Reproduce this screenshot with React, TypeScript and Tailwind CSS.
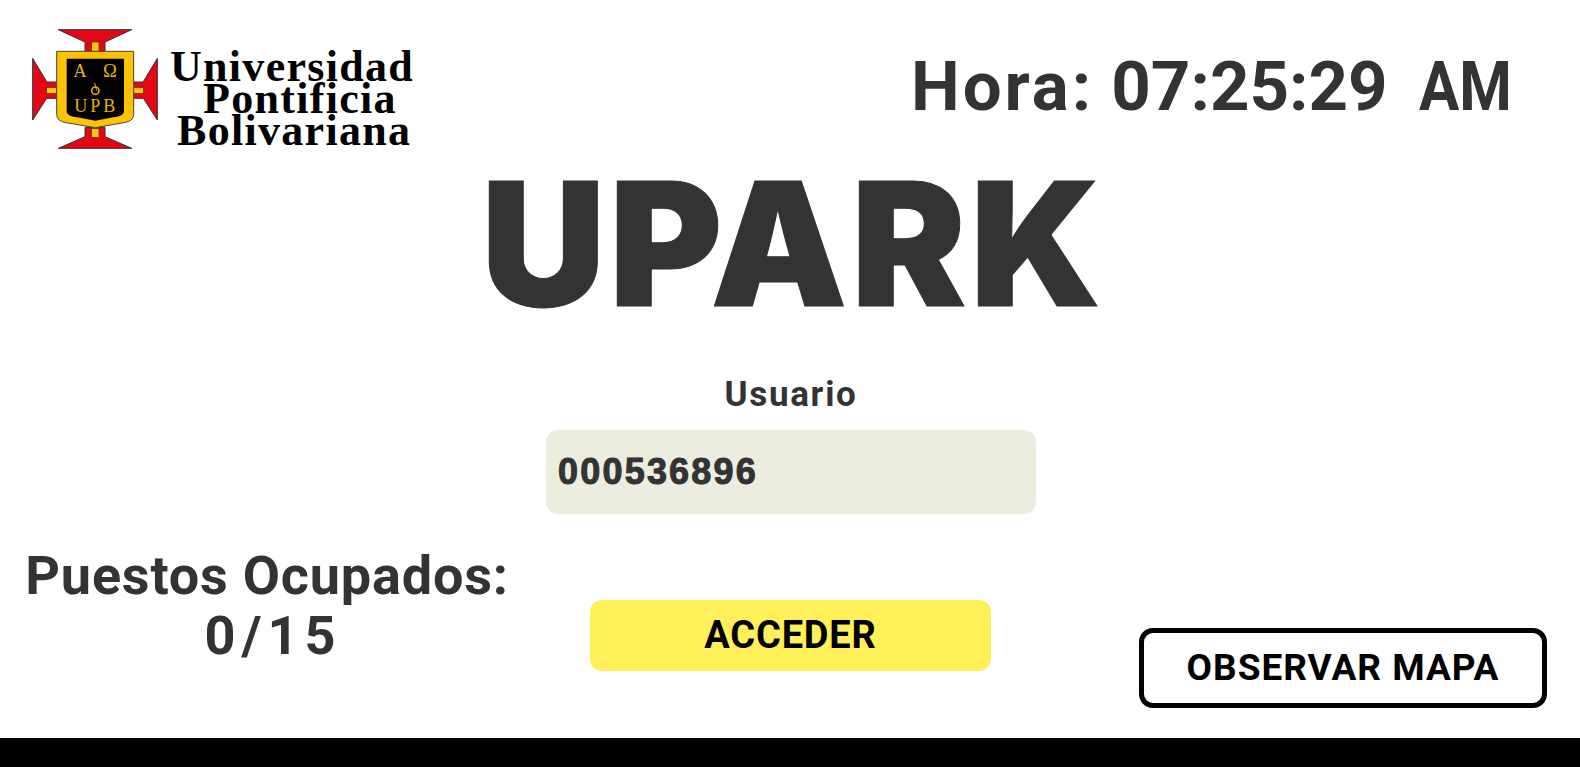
import React from "react";

const sans = "font-['Roboto','Liberation_Sans',sans-serif]";

const Crest: React.FC = () => {
  return (
    <svg viewBox="0 0 450 420" className="w-[150px] h-[140px] shrink-0">
      <g fill="#e30613" stroke="#333" strokeWidth="3">
        <path d="M115 29H335L255 66V96H195V66Z" />
        <path d="M115 385H335L255 350V322H195V350Z" />
        <path d="M38 115L80 185V186H112V235H80L38 300Z" />
        <path d="M412 115L370 185V186H338V235H370L412 300Z" />
      </g>
      <g fill="#fdc300" stroke="#333" strokeWidth="2">
        <rect x="215" y="66" width="22" height="28" />
        <rect x="215" y="326" width="22" height="26" />
        <rect x="80" y="203" width="30" height="17" />
        <rect x="340" y="203" width="30" height="17" />
      </g>
      <path
        d="M110 94H341V280C341 300 330 306 300 310L226 323L150 310C120 306 110 300 110 280Z"
        fill="#fdc300"
        stroke="#444"
        strokeWidth="3"
      />
      <path d="M140 116H312V272C312 285 300 289 280 292L226 302L172 292C152 289 140 285 140 272Z" fill="#000" />
      <g fill="#e8b000" fontFamily="Liberation Serif, serif">
        <text x="180" y="172" fontSize="56" textAnchor="middle">A</text>
        <text x="270" y="172" fontSize="56" textAnchor="middle">Ω</text>
        <text x="229" y="276" fontSize="54" textAnchor="middle" letterSpacing="9">UPB</text>
      </g>
      <circle cx="226" cy="212" r="11" fill="none" stroke="#e8b000" strokeWidth="5" />
      <path d="M224 188L230 212" stroke="#e8b000" strokeWidth="3" />
    </svg>
  );
};

const Logo: React.FC = () => {
  return (
    <div className="flex items-start">
      <Crest />
      <div className="flex flex-col font-['Liberation_Serif',serif] font-bold text-black text-[44px] leading-[32px] pt-[31px] tracking-[1.3px]">
        <span>Universidad</span>
        <span className="ml-[33px]">Pontificia</span>
        <span className="ml-[7px]">Bolivariana</span>
      </div>
    </div>
  );
};

const App: React.FC = () => {
  return (
    <div className={`flex flex-col w-full h-[767px] bg-white overflow-hidden text-[#333] ${sans}`}>
      <header className="flex justify-between items-start pl-[20px] pr-[68px] pt-[20px]">
        <Logo />
        <p className="mt-[31px] text-[69px] leading-[72px] font-bold whitespace-pre">
          <span className="tracking-[3px]">Hora:</span> 07:25:29{"  "}
          <span className="inline-block w-[93px] -ml-[3px] scale-x-[0.87] origin-left">AM</span>
        </p>
      </header>

      <h1 className="-mt-[7px] pl-[6px] text-center font-['Inter',sans-serif] font-black text-[172px] leading-[180px] tracking-[4px] [-webkit-text-stroke:1px_#333]">
        UPARK
      </h1>

      <main className="flex flex-col items-center mt-[42px] pl-[2px]">
        <label className="text-[35px] leading-[40px] font-bold tracking-[1.7px]">Usuario</label>
        <input
          readOnly
          value="000536896"
          className="mt-[15px] w-[490px] h-[84px] rounded-[12px] bg-[#ededdf] px-[12px] font-['Liberation_Sans',sans-serif] font-bold text-[36px] tracking-[2.2px] text-[#333] outline-none [-webkit-text-stroke:1px_#333]"
        />
      </main>

      <div className="grid grid-cols-[534px_401px_1fr] gap-x-[56px] flex-1 pr-[33px]">
        <div className="flex flex-col items-center text-center pt-[32px]">
          <p className="text-[54px] leading-[60px] font-bold tracking-[0.8px] whitespace-nowrap">Puestos Ocupados:</p>
          <p className="text-[54px] leading-[60px] font-bold tracking-[6px] ml-[12px]">0/15</p>
        </div>
        <div className="flex justify-center pt-[86px]">
          <button className="w-[401px] h-[71px] rounded-[12px] bg-[#fff05a] text-black text-[38px] font-bold tracking-[0.8px]">
            ACCEDER
          </button>
        </div>
        <div className="flex justify-end pt-[114px]">
          <button className="w-[408px] h-[80px] rounded-[14px] border-[5px] border-black bg-white text-black text-[37px] font-bold tracking-[1px]">
            OBSERVAR MAPA
          </button>
        </div>
      </div>

      <footer className="h-[29px] bg-black" />
    </div>
  );
};

export default App;
